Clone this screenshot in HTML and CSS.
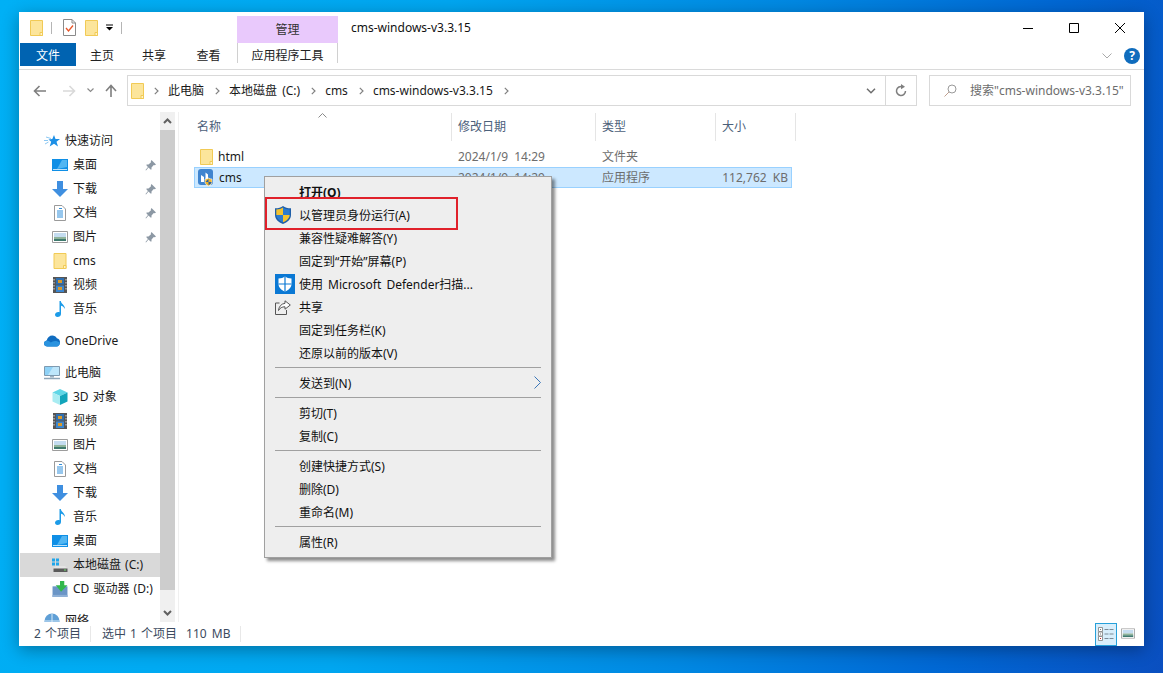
FILE: index.html
```html
<!DOCTYPE html>
<html lang="zh-CN">
<head>
<meta charset="utf-8">
<title>cms-windows-v3.3.15</title>
<link rel="stylesheet" href="styles.css">
</head>
<body>
<svg class="defs" width="0" height="0" aria-hidden="true">
  <symbol id="i-folder" viewBox="0 0 13 16"><path d="M.5.5h12v15H.5z" fill="#fce59b" stroke="#f1ca55"/><path d="M10 12.5h2.500v3H10z" fill="#fff3c8" stroke="#f1ca55"/></symbol>
  <symbol id="i-check" viewBox="0 0 13 17"><path d="M.5.5h8.500l3.500 3.500v12.500H.5z" fill="#fff" stroke="#8a8a8a"/><path d="M9 .5v3.500h3.500" fill="none" stroke="#8a8a8a"/><path d="M3 9l2.500 3L10 6.500" fill="none" stroke="#e8562a" stroke-width="1.300"/></symbol>
  <symbol id="i-desktop" viewBox="0 0 16 12"><path d="M0 0h16v12H0z" fill="#0f8fe6"/><path d="M10 1h5v7L5 10z" fill="#52b6f2"/><path d="M1 10.500h14" stroke="#bfe3fa"/></symbol>
  <symbol id="i-down" viewBox="0 0 16 16"><path d="M5 0h6v8h5l-8 8-8-8h5z" fill="#3f8fe0"/></symbol>
  <symbol id="i-doc" viewBox="0 0 12 16"><path d="M.5.500h7.500l3.500 3.500v11.500H.5z" fill="#fff" stroke="#9a9a9a"/><path d="M5 3.500h3M3 6h6M3 8h6M3 10h6M3 12h6" stroke="#2f8fdc"/></symbol>
  <symbol id="i-pic" viewBox="0 0 16 12"><path d="M.5.500h15v11H.5z" fill="#fff" stroke="#9c9c9c"/><path d="M2 2h12v4H2z" fill="#c4dcf0"/><path d="M2 6h12v2H2z" fill="#8fb39a"/><path d="M2 8h12v2H2z" fill="#3f7a6e"/></symbol>
  <symbol id="i-video" viewBox="0 0 14 16"><path d="M0 0h14v16H0z" fill="#555"/><path d="M3 1h8v6.500H3z" fill="#2f6fb0"/><path d="M3 8.500h8V15H3z" fill="#3b86cf"/><path d="M5 3h4v3H5zM5 10h4v3H5z" fill="#d99a2b"/><path d="M1 2v12M13 2v12" stroke="#ddd" stroke-dasharray="1.500 1.500"/></symbol>
  <symbol id="i-music" viewBox="0 0 12 16"><path d="M5.500 0h1.300c.3 3 4.200 3.800 4.200 8-1-2-2.500-3-4-3.200V13c0 1.800-1.600 3-3.500 3C1.900 16 1 15 1 13.800 1 12.300 2.600 11 4.300 11c.5 0 .9.100 1.200.2z" fill="#1c9be8"/></symbol>
  <symbol id="i-cloud" viewBox="0 0 16 11"><path d="M3.500 11C1.500 11 0 9.700 0 8c0-1.500 1.100-2.700 2.700-3C3.300 2 5.600 0 8.300 0c2 0 3.700 1 4.500 2.700C14.700 3 16 4.500 16 6.500V7c0 2.300-1.500 4-3.500 4z" fill="#0f6cc0"/><path d="M3.500 11C1.500 11 0 9.700 0 8c0-1.500 1.100-2.700 2.700-3 2 0 3.300 1 4 2l2-1c2-1 5-.5 7.300 1 0 2.300-1.500 4-3.500 4z" fill="#2a93df"/></symbol>
  <symbol id="i-pc" viewBox="0 0 16 14"><path d="M.5.500h15v9H.5z" fill="#8fd2f7" stroke="#7e9ab0"/><path d="M9 1h6v8H4z" fill="#bde6fb"/><path d="M6 10h4v1.500H6z" fill="#9db2c2"/><path d="M0 12.500h16" stroke="#8fa6b8" stroke-width="1.500"/></symbol>
  <symbol id="i-cube" viewBox="0 0 16 16"><path d="M8 0l7.500 3.500L8 7 .5 3.500z" fill="#5fd6e6"/><path d="M.5 3.500L8 7v9L.5 12.500z" fill="#a9ecf2"/><path d="M15.500 3.500L8 7v9l7.500-3.500z" fill="#12a5bb"/></symbol>
  <symbol id="i-disk" viewBox="0 0 16 15"><path d="M0 1h3v3H0zM4 1h3v3H4zM0 5h3v3H0zM4 5h3v3H4z" fill="#1fa5ea"/><path d="M1 11L4 8.500h9L15.500 11z" fill="#e4e4e4"/><path d="M1.500 11h14v3.500h-14z" fill="#5a5a5a"/><path d="M12 12h2v1h-2z" fill="#6fe06f"/></symbol>
  <symbol id="i-cd" viewBox="0 0 14 15"><path d="M0 5h14v10H0z" fill="#6b95c6"/><path d="M0 13h14v2H0z" fill="#8fb0d6"/><path d="M7 0h4v4h3l-6 6-5-6h4z" fill="#31b84c"/></symbol>
  <symbol id="i-net" viewBox="0 0 16 16"><circle cx="8" cy="8" r="7.500" fill="#5f9fd6"/><path d="M1 8h14M8 1v14" stroke="#d9ecfa"/><path d="M0 13h16v3H0z" fill="#8a9bab"/></symbol>
  <symbol id="i-pin" viewBox="0 0 11 11"><path d="M6.500 0L11 4.500 9.800 5.200 8.800 5 6.500 7.500 6.500 9.500 5.500 9.500 3.500 7.500 1 10.500 .5 10 3 7 1.500 5.500V4.500H3.500L6 2.200 5.800 1.200z" fill="#8c98a4"/></symbol>
  <symbol id="i-shield" viewBox="0 0 16 18"><path d="M8 0c2 1.500 4.500 2.300 8 2.300V9c0 4-3.500 7.500-8 9-4.500-1.500-8-5-8-9V2.300C3.500 2.300 6 1.500 8 0z" fill="#1f5fa8"/><path d="M8 1.500V9H1.300V3.500C4 3.400 6.300 2.800 8 1.500z" fill="#f4c22e"/><path d="M8 9h6.700c-.2 3.300-3 5.800-6.700 7.300z" fill="#f4c22e"/><path d="M8 1.500c1.700 1.300 4 1.900 6.700 2V9H8zM1.300 9H8v7.300C4.300 14.800 1.500 12.300 1.300 9z" fill="#2c7bd0"/></symbol>
  <symbol id="i-defender" viewBox="0 0 20 20"><path d="M0 0h20v20H0z" fill="#0a78d4"/><path d="M10 2.500c1.700 1.300 3.800 2 6.500 2V10c0 3.500-2.800 6.200-6.500 7.500C6.300 16.200 3.500 13.500 3.500 10V4.500c2.700 0 4.800-.7 6.500-2z" fill="#fff"/><path d="M10 2.500v15M3.500 10h13" stroke="#0a78d4" stroke-width="1.200"/></symbol>
  <symbol id="i-share" viewBox="0 0 16 15"><path d="M4.500 3H.5v11.500h11V10" fill="none" stroke="#555"/><path d="M10 .8L15.300 5 10 9.200V6.800C7 6.800 5 7.800 3.500 10.500 3.800 6.800 6 3.800 10 3.300z" fill="#fff" stroke="#555"/></symbol>
  <symbol id="i-exe" viewBox="0 0 16 17"><rect width="15" height="16" rx="3" fill="#3f84cf"/><path d="M3 13V6l3 2v5zM7.500 13V3.500l2.500 2V13z" fill="#fff"/><path d="M10.500 9c1 .7 2 1 3.500 1v3c0 1.800-1.500 3.200-3.500 4C8.500 16.200 7 14.800 7 13v-3c1.500 0 2.500-.3 3.500-1z" fill="#f0b429" stroke="#fff" stroke-width=".6"/><path d="M10.500 10v3H7.500M10.500 13h3c0 1.200-1.300 2.500-3 3z" fill="#2660a8"/></symbol>
</svg>

<main class="window">
  <header class="title-row">
    <div class="qat">
      <svg class="ico-folder"><use href="#i-folder"/></svg>
      <span class="qat-sep"></span>
      <svg class="ico-check"><use href="#i-check"/></svg>
      <svg class="ico-folder"><use href="#i-folder"/></svg>
      <svg class="qat-drop" viewBox="0 0 7 7"><path d="M0 1h7" stroke="#000"/><path d="M0 3h7L3.500 6.500z"/></svg>
      <span class="qat-sep"></span>
    </div>
    <div class="context-tab">管理</div>
    <div class="win-title">cms-windows-v3.3.15</div>
    <div class="win-controls">
      <span class="win-btn"><svg viewBox="0 0 10 10"><path d="M0 5.500h10" stroke="#000"/></svg></span>
      <span class="win-btn"><svg viewBox="0 0 10 10"><path d="M.5.500h9v9h-9z" fill="none" stroke="#000"/></svg></span>
      <span class="win-btn"><svg viewBox="0 0 10 10"><path d="M0 0l10 10M10 0L0 10" stroke="#000" stroke-width="1"/></svg></span>
    </div>
  </header>

  <nav class="ribbon-row">
    <span class="tab tab-file">文件</span>
    <span class="tab tab-a">主页</span>
    <span class="tab tab-a">共享</span>
    <span class="tab tab-b">查看</span>
    <span class="tab tab-tools">应用程序工具</span>
    <span class="ribbon-right">
      <svg class="ribbon-chev" viewBox="0 0 10 6"><path d="M.5.500L5 5 9.500.5" fill="none" stroke="#a9a9a9"/></svg>
      <span class="help">?</span>
    </span>
  </nav>

  <div class="address-row">
    <div class="nav-btns">
      <svg class="nav-back" viewBox="0 0 13 12"><path d="M13 6H2M6.500 1L1.500 6l5 5" fill="none" stroke="#7f7f7f" stroke-width="1.600"/></svg>
      <svg class="nav-fwd" viewBox="0 0 13 12"><path d="M0 6h11M6.500 1l5 5-5 5" fill="none" stroke="#d9d9d9" stroke-width="1.600"/></svg>
      <svg class="nav-drop" viewBox="0 0 7 5"><path d="M.5.500L3.500 3.500 6.500.5" fill="none" stroke="#8a8a8a" stroke-width="1.200"/></svg>
      <svg class="nav-up" viewBox="0 0 12 13"><path d="M6 13V2M1 7l5-5.500L11 7" fill="none" stroke="#7f7f7f" stroke-width="1.600"/></svg>
    </div>
    <div class="addr">
      <svg class="ico-folder"><use href="#i-folder"/></svg>
      <svg class="crumb-sep" viewBox="0 0 5 8"><path d="M.8.800L4 4 .8 7.200" fill="none" stroke="#808080" stroke-width="1.200"/></svg>
      <span class="crumb">此电脑</span>
      <svg class="crumb-sep" viewBox="0 0 5 8"><path d="M.8.800L4 4 .8 7.200" fill="none" stroke="#808080" stroke-width="1.200"/></svg>
      <span class="crumb">本地磁盘 (C:)</span>
      <svg class="crumb-sep" viewBox="0 0 5 8"><path d="M.8.800L4 4 .8 7.200" fill="none" stroke="#808080" stroke-width="1.200"/></svg>
      <span class="crumb">cms</span>
      <svg class="crumb-sep" viewBox="0 0 5 8"><path d="M.8.800L4 4 .8 7.200" fill="none" stroke="#808080" stroke-width="1.200"/></svg>
      <span class="crumb">cms-windows-v3.3.15</span>
      <svg class="crumb-sep" viewBox="0 0 5 8"><path d="M.8.800L4 4 .8 7.200" fill="none" stroke="#808080" stroke-width="1.200"/></svg>
      <span class="addr-end">
        <svg class="addr-drop" viewBox="0 0 10 6"><path d="M1 .8L5 4.800 9 .8" fill="none" stroke="#6e6e6e" stroke-width="1.500"/></svg>
        <span class="addr-refresh"><svg viewBox="0 0 12 13"><path d="M10.500 7a4.500 4.500 0 1 1-3-4.300" fill="none" stroke="#7f7f7f" stroke-width="1.500"/><path d="M6 0l4 2.700L6 5.200z" fill="#7f7f7f"/></svg></span>
      </span>
    </div>
    <div class="search">
      <svg class="search-ico" viewBox="0 0 13 13"><circle cx="8" cy="5" r="4" fill="none" stroke="#9a9a9a"/><path d="M5 8L.5 12.500" stroke="#c0a090"/></svg>
      <span>搜索"cms-windows-v3.3.15"</span>
    </div>
  </div>

  <div class="body">
    <aside class="sidebar">
      <ul class="tree">
        <li class="row lv1"><svg class="ic" viewBox="0 0 16 14"><path d="M10 1l1.500 4H16l-3.500 2.800L14 12.500l-4-2.800-4.300 2.800 1.500-4.700L4.500 5.500 8.300 5z" fill="#1c8fe6"/><path d="M2 3l5 1.500M0 6.500h4M1 10l3.500-2" stroke="#8cc8f3"/></svg><span>快速访问</span></li>
        <li class="row lv2"><svg class="ic"><use href="#i-desktop"/></svg><span>桌面</span><svg class="pin"><use href="#i-pin"/></svg></li>
        <li class="row lv2"><svg class="ic"><use href="#i-down"/></svg><span>下载</span><svg class="pin"><use href="#i-pin"/></svg></li>
        <li class="row lv2"><svg class="ic"><use href="#i-doc"/></svg><span>文档</span><svg class="pin"><use href="#i-pin"/></svg></li>
        <li class="row lv2"><svg class="ic"><use href="#i-pic"/></svg><span>图片</span><svg class="pin"><use href="#i-pin"/></svg></li>
        <li class="row lv2"><svg class="ic"><use href="#i-folder"/></svg><span>cms</span></li>
        <li class="row lv2"><svg class="ic"><use href="#i-video"/></svg><span>视频</span></li>
        <li class="row lv2"><svg class="ic"><use href="#i-music"/></svg><span>音乐</span></li>
        <li class="row lv1 group"><svg class="ic"><use href="#i-cloud"/></svg><span>OneDrive</span></li>
        <li class="row lv1 group"><svg class="ic"><use href="#i-pc"/></svg><span>此电脑</span></li>
        <li class="row lv2"><svg class="ic"><use href="#i-cube"/></svg><span>3D 对象</span></li>
        <li class="row lv2"><svg class="ic"><use href="#i-video"/></svg><span>视频</span></li>
        <li class="row lv2"><svg class="ic"><use href="#i-pic"/></svg><span>图片</span></li>
        <li class="row lv2"><svg class="ic"><use href="#i-doc"/></svg><span>文档</span></li>
        <li class="row lv2"><svg class="ic"><use href="#i-down"/></svg><span>下载</span></li>
        <li class="row lv2"><svg class="ic"><use href="#i-music"/></svg><span>音乐</span></li>
        <li class="row lv2"><svg class="ic"><use href="#i-desktop"/></svg><span>桌面</span></li>
        <li class="row lv2 selected"><svg class="ic"><use href="#i-disk"/></svg><span>本地磁盘 (C:)</span></li>
        <li class="row lv2"><svg class="ic"><use href="#i-cd"/></svg><span>CD 驱动器 (D:)</span></li>
        <li class="row lv1 group"><svg class="ic"><use href="#i-net"/></svg><span>网络</span></li>
      </ul>
      <div class="scrollbar">
        <span class="sb-btn"><svg viewBox="0 0 9 6"><path d="M1 5l3.500-3.500L8 5" fill="none" stroke="#606060" stroke-width="2"/></svg></span>
        <span class="sb-thumb"></span>
        <span class="sb-track"></span>
        <span class="sb-btn"><svg viewBox="0 0 9 6"><path d="M1 1l3.500 3.500L8 1" fill="none" stroke="#606060" stroke-width="2"/></svg></span>
      </div>
    </aside>

    <section class="files">
      <svg class="sort-caret" viewBox="0 0 9 5"><path d="M.5 4.500L4.500.5l4 4" fill="none" stroke="#8a8a8a"/></svg>
      <div class="cols head">
        <span>名称</span><span>修改日期</span><span>类型</span><span>大小</span>
      </div>
      <div class="cols file">
        <span class="name"><svg class="ico-folder"><use href="#i-folder"/></svg>html</span>
        <span class="meta date">2024/1/9 14:29</span><span class="meta">文件夹</span><span class="meta"></span>
      </div>
      <div class="cols file active">
        <span class="name"><svg class="ico-exe"><use href="#i-exe"/></svg>cms</span>
        <span class="meta date">2024/1/9 14:29</span><span class="meta">应用程序</span><span class="meta size">112,762 KB</span>
      </div>
    </section>
  </div>

  <footer class="status">
    <span class="st-a">2 个项目</span>
    <span class="st-b">选中 1 个项目<span class="st-size">110 MB</span></span>
    <span class="views">
      <span class="view-on"><svg viewBox="0 0 16 14"><path d="M.5.500h4v4h-4zM.5 5h4v4h-4zM.5 9.500h4v4h-4z" fill="#fff" stroke="#8a8a8a" stroke-width=".9"/><path d="M6.500 2.500h4M11.500 2.500h4M6.500 7h4M11.500 7h4M6.500 11.500h4M11.500 11.500h4" stroke="#7a8a96"/><path d="M2 2h1v1H2zM2 6.500h1v1H2z" fill="#777"/><path d="M2 11h1v1H2z" fill="#c22"/></svg></span>
      <svg class="view-off" viewBox="0 0 16 12"><use href="#i-pic" width="16" height="12"/></svg>
    </span>
  </footer>

  <div class="menu">
    <div class="mi strong">打开(O)</div>
    <div class="mi"><svg class="mi-ic shield"><use href="#i-shield"/></svg>以管理员身份运行(A)</div>
    <div class="mi">兼容性疑难解答(Y)</div>
    <div class="mi">固定到“开始”屏幕(P)</div>
    <div class="mi"><svg class="mi-ic defender"><use href="#i-defender"/></svg>使用 Microsoft Defender扫描...</div>
    <div class="mi"><svg class="mi-ic share"><use href="#i-share"/></svg>共享</div>
    <div class="mi">固定到任务栏(K)</div>
    <div class="mi">还原以前的版本(V)</div>
    <div class="msep"></div>
    <div class="mi">发送到(N)<svg class="mi-more" viewBox="0 0 7 13"><path d="M.5.500l6 6-6 6" fill="none" stroke="#3a76b8"/></svg></div>
    <div class="msep"></div>
    <div class="mi">剪切(T)</div>
    <div class="mi">复制(C)</div>
    <div class="msep"></div>
    <div class="mi">创建快捷方式(S)</div>
    <div class="mi">删除(D)</div>
    <div class="mi">重命名(M)</div>
    <div class="msep"></div>
    <div class="mi">属性(R)</div>
    <div class="highlight"></div>
  </div>
</main>
</body>
</html>
```
FILE: styles.css
```css
* { box-sizing: border-box; }
html, body { margin: 0; height: 100%; }
body {
  width: 1163px;
  height: 673px;
  overflow: hidden;
  padding: 12px 0 0 19px;
  background: linear-gradient(100deg, #00b0f5 0%, #00a6f0 35%, #0088e2 62%, #0068d4 82%, #0a4fc0 100%);
  font: 12px/16px "Noto Sans", "Noto Sans CJK SC", sans-serif;
  color: #1a1a1a;
  word-spacing: 1px;
}
.defs { position: absolute; }
svg { display: block; flex: none; }

.window {
  position: relative;
  width: 1125px;
  height: 634px;
  padding: 0 1px;
  background: #fff;
  display: flex;
  flex-direction: column;
  box-shadow: 0 4px 16px rgba(0, 0, 0, .32);
}

/* title row */
.title-row { height: 31px; display: flex; align-items: center; flex: none; }
.qat { width: 217px; padding-left: 10px; display: flex; align-items: center; }
.ico-folder { width: 13px; height: 16px; }
.ico-check { width: 13px; height: 17px; margin-right: 9px; }
.qat-sep { width: 1px; height: 12px; background: #b5b5b5; margin: 0 11px 0 8px; }
.qat-drop { width: 7px; height: 7px; margin-left: 8px; }
.context-tab {
  align-self: flex-end;
  width: 101px;
  height: 27px;
  background: #e9c9fc;
  text-align: center;
  line-height: 28px;
  color: #333;
}
.win-title { margin-left: 13px; color: #111; }
.win-controls { margin-left: auto; display: flex; }
.win-btn { width: 46px; height: 20px; display: flex; align-items: center; justify-content: center; }
.win-btn svg { width: 10px; height: 10px; }

/* ribbon tabs */
.ribbon-row {
  flex: none;
  height: 27px;
  margin: 0 -1px;
  padding: 0 1px;
  display: flex;
  border-bottom: 1px solid #dadada;
}
.tab { height: 23px; line-height: 25px; text-align: center; color: #222; }
.tab-file { width: 56px; background: #0063b1; color: #fff; }
.tab-a { width: 52px; }
.tab-b { width: 57px; }
.tab-tools {
  width: 101px;
  height: 20px;
  border-left: 1px solid #d0d0d0;
  border-right: 1px solid #d0d0d0;
}
.ribbon-right { margin-left: auto; padding-right: 3px; display: flex; align-items: center; height: 26px; }
.ribbon-chev { width: 10px; height: 6px; margin-right: 12px; }
.help {
  width: 16px;
  height: 16px;
  border-radius: 50%;
  background: #0f6cbd;
  color: #fff;
  font-weight: 700;
  line-height: 16px;
  text-align: center;
}

/* address row */
.address-row { flex: none; height: 42px; padding-top: 5px; display: flex; }
.nav-btns { width: 107px; height: 31px; padding-left: 13px; display: flex; align-items: center; }
.nav-back { width: 13px; height: 12px; }
.nav-fwd { width: 13px; height: 12px; margin-left: 17px; }
.nav-drop { width: 7px; height: 5px; margin-left: 11px; }
.nav-up { width: 12px; height: 13px; margin-left: 11px; }
.addr {
  width: 790px;
  height: 31px;
  border: 1px solid #d9d9d9;
  padding-left: 3px;
  display: flex;
  align-items: center;
  color: #1a1a1a;
  word-spacing: 2px;
}
.crumb-sep { width: 5px; height: 8px; margin: 0 9px 0 11px; }
.ico-folder + .crumb-sep { margin-left: 10px; }
.addr-end { margin-left: auto; display: flex; align-items: center; height: 100%; }
.addr-drop { width: 10px; height: 6px; margin-right: 9px; }
.addr-refresh {
  width: 31px;
  height: 100%;
  border-left: 1px solid #d9d9d9;
  display: flex;
  align-items: center;
  justify-content: center;
}
.addr-refresh svg { width: 12px; height: 13px; }
.search {
  width: 202px;
  height: 31px;
  margin-left: 12px;
  border: 1px solid #d9d9d9;
  padding-left: 14px;
  display: flex;
  align-items: center;
  color: #6d6d6d;
  white-space: nowrap;
}
.search-ico { width: 13px; height: 13px; margin-right: 13px; }

/* body */
.body { flex: 1; min-height: 0; display: flex; }
.sidebar { width: 155px; display: flex; flex: none; }
.tree { width: 140px; margin: 0; padding: 17px 0 0; list-style: none; overflow: hidden; }
.row { height: 24px; display: flex; align-items: center; color: #1a1a1a; white-space: nowrap; }
.row.group { margin-top: 8px; }
.row.selected { background: #d9d9d9; }
.lv1 { padding-left: 24px; }
.lv2 { padding-left: 32px; }
.ic { width: 16px; height: 16px; margin-right: 5px; }
.pin { width: 11px; height: 11px; margin-left: auto; margin-right: 4px; }
.scrollbar { width: 15px; background: #f0f0f0; display: flex; flex-direction: column; flex: none; }
.sb-btn { height: 18px; display: flex; align-items: center; justify-content: center; flex: none; }
.sb-btn svg { width: 9px; height: 6px; }
.sb-thumb { height: 460px; background: #cdcdcd; flex: none; }
.sb-track { flex: 1; }

.files {
  position: relative;
  flex: 1;
  margin-left: 3px;
  border-left: 1px solid #f0f0f0;
  padding-left: 15px;
}
.sort-caret { position: absolute; left: 139px; top: 1px; width: 9px; height: 5px; }
.cols { display: grid; grid-template-columns: 258px 144px 120px 80px; }
.head { height: 27px; margin-top: 1px; }
.head span { border-right: 1px solid #e5e5e5; color: #4c607a; line-height: 28px; padding-left: 3px; }
.head span + span { padding-left: 6px; }
.file { height: 21px; width: 598px; grid-template-columns: 258px 144px 120px 76px; align-items: center; border: 1px solid transparent; }
.head + .file { margin-top: 6px; }
.file.active { background: #cce8ff; border-color: #99d1ff; }
.file .name { display: flex; align-items: center; padding-left: 5px; color: #1a1a1a; }
.file .name svg { margin-right: 5px; }
.file .meta { color: #6d6d6d; padding-left: 5px; }
.file .meta.date { word-spacing: 3px; }
.file .meta.size { padding-left: 0; padding-right: 5px; text-align: right; word-spacing: 3px; white-space: nowrap; }
.ico-exe { width: 16px; height: 17px; margin-left: -2px; }

/* status */
.status { flex: none; height: 24px; display: flex; align-items: center; color: #3b4a5e; }
.st-a { width: 71px; padding-left: 14px; border-right: 1px solid #e8e8e8; margin-right: 11px; }
.st-b { width: 139px; border-right: 1px solid #e8e8e8; white-space: nowrap; }
.st-size { margin-left: 9px; word-spacing: 2px; }
.views { margin-left: auto; padding-right: 8px; display: flex; align-items: center; gap: 4px; }
.view-on { width: 22px; height: 23px; border: 1px solid #26a0da; background: #d8eefb; display: flex; align-items: center; justify-content: center; }
.view-on svg { width: 16px; height: 14px; }
.view-off { width: 14px; height: 11px; margin-top: -1px; }

/* context menu */
.menu {
  position: absolute;
  left: 245px;
  top: 164px;
  width: 288px;
  height: 382px;
  background: #eee;
  border: 1px solid #a0a0a0;
  padding: 3px 0 0;
  box-shadow: 3px 3px 3px rgba(0, 0, 0, .45);
  color: #111;
  word-spacing: 2px;
}
.mi { position: relative; height: 23px; line-height: 26px; padding-left: 34px; white-space: nowrap; }
.mi.strong { font-weight: 700; }
.msep { height: 7px; margin: 0 10px; padding-top: 3px; }
.msep::before { content: ""; display: block; height: 1px; background: #a0a0a0; }
.mi-ic { position: absolute; }
.mi-ic.shield { left: 10px; top: 3px; width: 16px; height: 18px; }
.mi-ic.defender { left: 10px; top: 2px; width: 20px; height: 20px; }
.mi-ic.share { left: 10px; top: 5px; width: 16px; height: 15px; }
.mi-more { position: absolute; right: 10px; top: 5px; width: 7px; height: 13px; }
.highlight {
  position: absolute;
  left: 0;
  top: 20px;
  width: 193px;
  height: 33px;
  border: 2px solid #e0202a;
}
```
